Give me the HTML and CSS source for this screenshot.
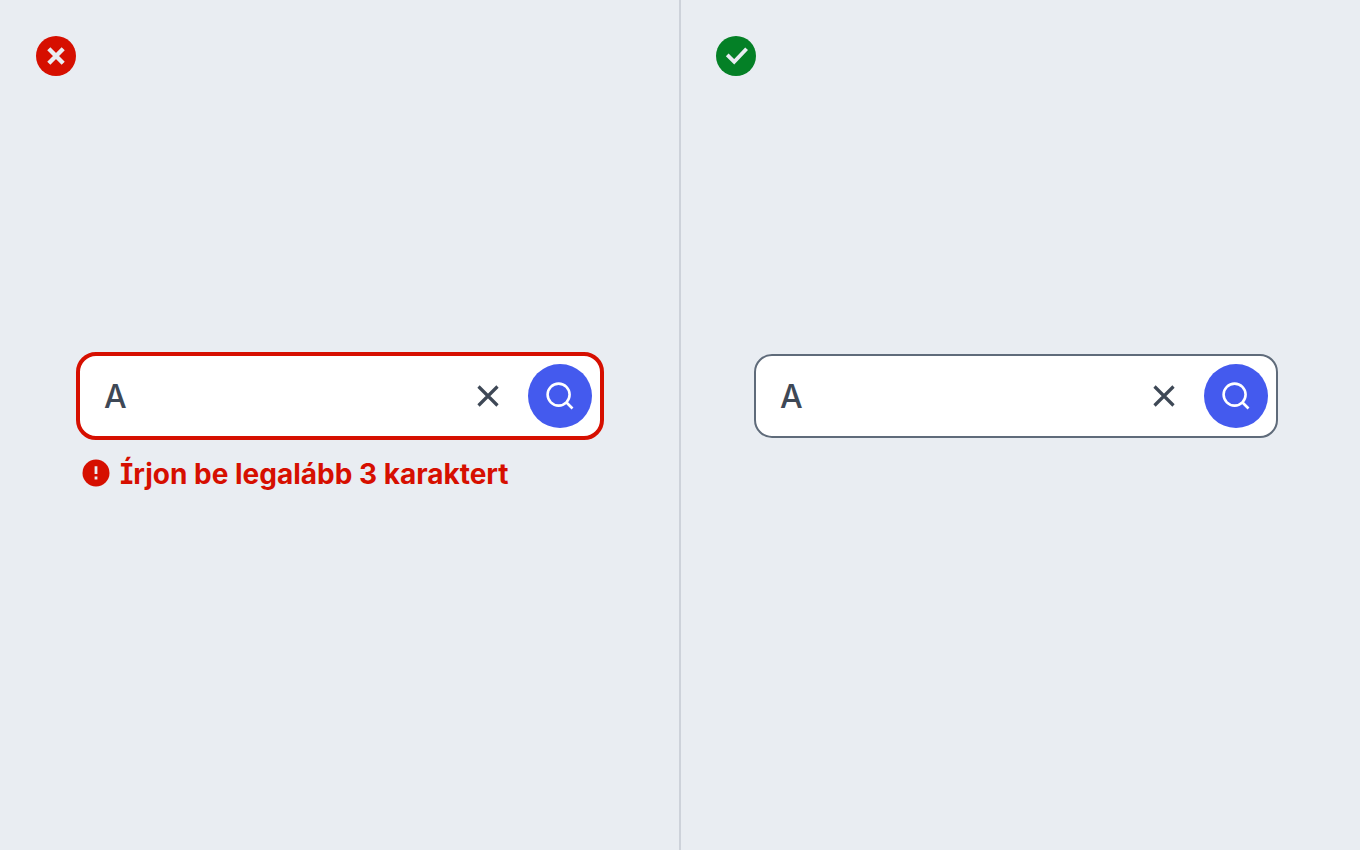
FILE: index.html
```html
<!DOCTYPE html>
<html lang="hu">
<head>
<meta charset="utf-8">
<meta name="viewport" content="width=device-width, initial-scale=1">
<title>Keresőmező</title>
<link rel="stylesheet" href="styles.css">
</head>
<body>
<main class="comparison">
  <section class="panel panel-dont" aria-label="Kerülendő">
    <svg class="verdict" viewBox="0 0 40 40" aria-hidden="true">
      <circle cx="20" cy="20" r="20" fill="#d60f00"/>
      <path d="M12.800 12.800l14.400 14.400M27.200 12.800L12.800 27.200" fill="none" stroke="#e9edf2" stroke-width="4.400"/>
    </svg>
    <form class="search">
      <div class="field field-error">
        <input class="field-input" type="text" value="A" aria-label="Keresés" aria-invalid="true" aria-describedby="error">
        <button class="clear" type="reset" aria-label="Törlés">
          <svg class="icon" viewBox="0 0 40 40" aria-hidden="true"><path d="M10.500 10.500l19 19M29.500 10.500l-19 19" fill="none" stroke="#3e4856" stroke-width="3.200"/></svg>
        </button>
        <button class="submit" type="button" aria-label="Keresés indítása">
          <svg class="icon" viewBox="0 0 64 64" aria-hidden="true"><g fill="none" stroke="#fff" stroke-width="2.600"><circle cx="30.600" cy="30.600" r="11"/><path d="M38.500 38.500l6 6"/></g></svg>
        </button>
      </div>
      <p class="message" id="error">
        <svg class="message-icon" viewBox="0 0 28 28" aria-hidden="true">
          <circle cx="14" cy="14" r="13.500" fill="#d60f00"/>
          <path d="M14 7.300v7.700M14 17.500v3" stroke="#e9edf2" stroke-width="2.800"/>
        </svg>
        <span>Írjon be legalább 3 karaktert</span>
      </p>
    </form>
  </section>
  <section class="panel panel-do" aria-label="Javasolt">
    <svg class="verdict" viewBox="0 0 40 40" aria-hidden="true">
      <circle cx="20" cy="20" r="20" fill="#048026"/>
      <path d="M11.200 18.800l7 7L30.600 12.800" fill="none" stroke="#e9edf2" stroke-width="3.800"/>
    </svg>
    <form class="search">
      <div class="field">
        <input class="field-input" type="text" value="A" aria-label="Keresés">
        <button class="clear" type="reset" aria-label="Törlés">
          <svg class="icon" viewBox="0 0 40 40" aria-hidden="true"><path d="M10.500 10.500l19 19M29.500 10.500l-19 19" fill="none" stroke="#3e4856" stroke-width="3.200"/></svg>
        </button>
        <button class="submit" type="button" aria-label="Keresés indítása">
          <svg class="icon" viewBox="0 0 64 64" aria-hidden="true"><g fill="none" stroke="#fff" stroke-width="2.600"><circle cx="30.600" cy="30.600" r="11"/><path d="M38.500 38.500l6 6"/></g></svg>
        </button>
      </div>
    </form>
  </section>
</main>
</body>
</html>
```

FILE: styles.css
```css
* { box-sizing: border-box; }

body {
  margin: 0;
  background: linear-gradient(#cdd2da, #cdd2da) center / 2px 100% no-repeat #e9edf2;
  font-family: Inter, "Liberation Sans", sans-serif;
}

.comparison {
  display: grid;
  grid-template-columns: repeat(2, minmax(0, 1fr));
  min-height: 100vh;
}

.panel { padding: 36px; }

.verdict {
  display: block;
  width: 40px;
  height: 40px;
}

.panel-dont .search { margin: 276px 40px 0; }
.panel-do .search { margin: 278px 46px 0 38px; }

.field {
  display: flex;
  align-items: center;
  padding: 8px;
  background: #fff;
  border: 2px solid #5f6b7a;
  border-radius: 18px;
}

.field-error {
  border: 4px solid #d60f00;
  border-radius: 20px;
}

.field-input {
  flex: 1;
  min-width: 0;
  height: 64px;
  padding: 0 16px;
  border: 0;
  outline: 0;
  background: none;
  color: #3e4856;
  font-family: inherit;
  font-size: 32px;
  font-weight: 500;
}

.clear,
.submit {
  flex: none;
  padding: 0;
  border: 0;
  background: none;
  cursor: pointer;
}

.clear {
  width: 40px;
  height: 40px;
  margin-right: 20px;
}

.submit {
  width: 64px;
  height: 64px;
  border-radius: 50%;
  background: #445aee;
}

.icon {
  display: block;
  width: 100%;
  height: 100%;
}

.message {
  display: flex;
  align-items: center;
  gap: 10px;
  margin: 17px 6px 0;
  color: #d60f00;
  font-size: 28px;
  font-weight: 700;
  line-height: 34px;
  font-feature-settings: "cv08";
}

.message-icon {
  flex: none;
  width: 28px;
  height: 28px;
  margin-bottom: 2px;
}
```
